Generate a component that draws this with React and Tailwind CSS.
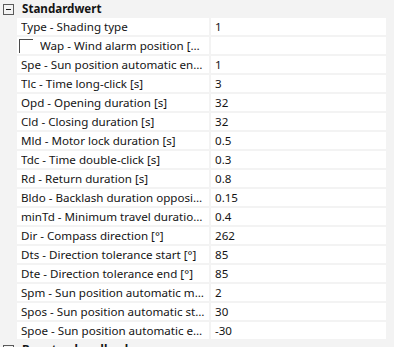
import React from "react";

const rows = [
  ["Type - Shading type", "1"],
  ["Wap - Wind alarm position [Steps]", "", true],
  ["Spe - Sun position automatic enable", "1"],
  ["Tlc - Time long-click [s]", "3"],
  ["Opd - Opening duration [s]", "32"],
  ["Cld - Closing duration [s]", "32"],
  ["Mld - Motor lock duration [s]", "0.5"],
  ["Tdc - Time double-click [s]", "0.3"],
  ["Rd - Return duration [s]", "0.8"],
  ["Bldo - Backlash duration opposite direction [s]", "0.15"],
  ["minTd - Minimum travel duration [s]", "0.4"],
  ["Dir - Compass direction [°]", "262"],
  ["Dts - Direction tolerance start [°]", "85"],
  ["Dte - Direction tolerance end [°]", "85"],
  ["Spm - Sun position automatic mode", "2"],
  ["Spos - Sun position automatic start", "30"],
  ["Spoe - Sun position automatic end", "-30"],
];

function MinusBox() {
  return (
    <svg width="11" height="11" viewBox="0 0 11 11" className="shrink-0">
      <rect x="0.5" y="0.5" width="10" height="10" fill="none" stroke="#5a5a5a" />
      <line x1="3" y1="5.5" x2="8" y2="5.5" stroke="#1a1a1a" />
    </svg>
  );
}

export default function App() {
  return (
    <div
      className="w-[394px] h-[347px] overflow-hidden bg-[#f3f3f3] text-[11.6px] text-[#141414]"
      style={{ fontFamily: '"Segoe UI", "Noto Sans", sans-serif' }}
    >
      <div className="flex items-center h-[18px] pl-[3px]">
        <MinusBox />
        <span className="ml-[8px] font-bold leading-none">Standardwert</span>
      </div>
      <div className="ml-[17px] w-[369px] grid grid-cols-[192px_175px] gap-[2px]">
        {rows.map(([label, value, check], i) => (
          <React.Fragment key={i}>
            <div className="bg-white h-[17px] flex items-center pl-[4px] pr-[4px] overflow-hidden">
              {check && (
                <span className="shrink-0 w-[14px] h-[14px] border-t border-l border-[#4a4a4a] -ml-[2px] mr-[7px]" />
              )}
              <span className="truncate leading-[16px]">{label}</span>
            </div>
            <div className="bg-white h-[17px] flex items-center pl-[4px] overflow-hidden">
              <span className="leading-[16px]">{value}</span>
            </div>
          </React.Fragment>
        ))}
      </div>
      <div className="flex items-center h-[18px] pl-[3px] mt-[2px]">
        <MinusBox />
        <span className="ml-[8px] font-bold leading-none">Benutzerhandbuch</span>
      </div>
    </div>
  );
}
